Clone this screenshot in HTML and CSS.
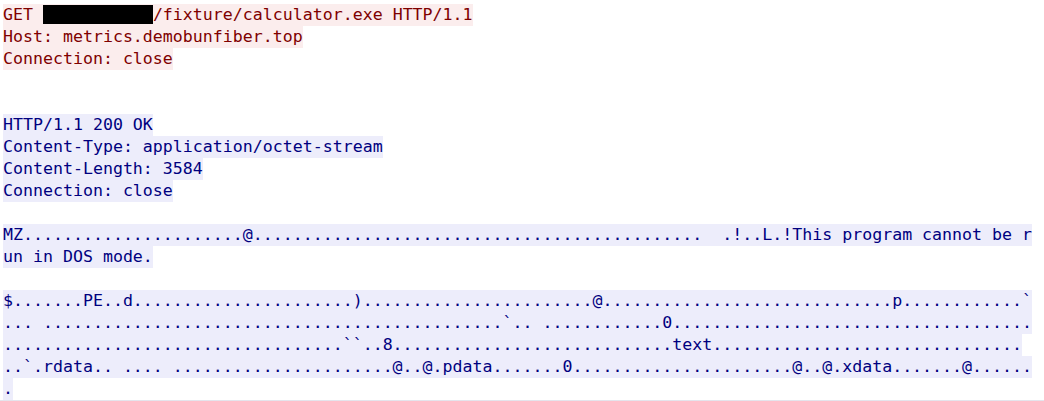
FILE: index.html
```html
<!DOCTYPE html>
<html>
<head>
<meta charset="utf-8">
<link rel="stylesheet" href="styles.css">
<title>Follow TCP Stream</title>
</head>
<body>
<div class="stream">
  <div class="msg client">
    <div class="ln">GET <span class="redact">           </span>/fixture/calculator.exe HTTP/1.1</div>
    <div class="ln">Host: metrics.demobunfiber.top</div>
    <div class="ln">Connection: close</div>
    <div class="ln blank"></div>
    <div class="ln blank"></div>
  </div>
  <div class="msg server">
    <div class="ln">HTTP/1.1 200 OK</div>
    <div class="ln">Content-Type: application/octet-stream</div>
    <div class="ln">Content-Length: 3584</div>
    <div class="ln">Connection: close</div>
    <div class="ln blank"></div>
    <div class="ln">MZ......................@.............................................  .!..L.!This program cannot be r</div>
    <div class="ln">un in DOS mode.</div>
    <div class="ln blank"></div>
    <div class="ln">$.......PE..d......................).......................@.............................p............`</div>
    <div class="ln">... ..............................................`.. ............0....................................</div>
    <div class="ln">..................................``..8............................text...............................</div>
    <div class="ln">..`.rdata.. .... ......................@..@.pdata.......0......................@..@.xdata.......@......</div>
    <div class="ln">.</div>
  </div>
</div>
</body>
</html>
```
FILE: styles.css
```css
html, body {
  margin: 0;
  padding: 0;
  background: #ffffff;
}

.stream {
  box-sizing: border-box;
  height: 401px;
  padding: 4px 0 0 3px;
  border-bottom: 1px solid #e4e4ec;
  overflow: hidden;
  font-family: "DejaVu Sans Mono", "Liberation Mono", monospace;
  font-size: 16.6px;
  line-height: 22px;
}

.ln {
  width: fit-content;
  height: 22px;
  white-space: pre;
}

.client {
  color: #7f0000;
}

.client .ln {
  background: #fbeded;
}

.server {
  color: #00007f;
}

.server .ln {
  background: #ededfb;
}

.msg .blank {
  background: none;
}

.redact {
  background: #000000;
}
```
